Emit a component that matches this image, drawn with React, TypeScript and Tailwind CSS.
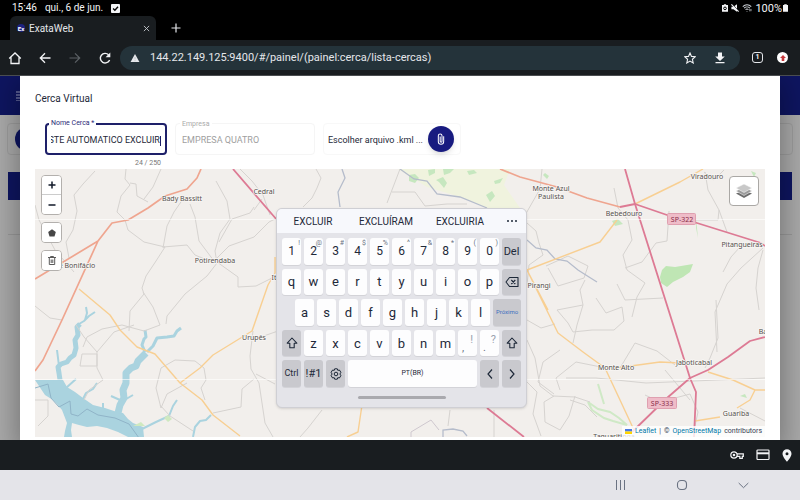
import { useLayoutEffect, useRef } from "react";
import type { ReactNode } from "react";

const FONT = "font-['Roboto','Noto_Sans',sans-serif]";

function StatusBar() {
  return (
    <div className="flex h-4 items-center justify-between bg-black px-3 text-[10px] leading-none text-gray-100">
      <div className="flex items-center gap-2">
        <span>15:46</span>
        <span>qui., 6 de jun.</span>
        <svg viewBox="0 0 10 10" className="size-[9px]">
          <rect width="10" height="10" rx="1" fill="#f3f4f6" />
          <path d="M2.3 5 4.3 7 7.8 3" fill="none" stroke="#000" strokeWidth="1.5" />
        </svg>
      </div>
      <div className="flex items-center gap-[3px]">
        <svg viewBox="0 0 8 10" className="h-2 w-[6px]">
          <path d="M2.5 0h3v1H8v9H0V1h2.5z" fill="#f3f4f6" />
          <circle cx="4" cy="5.5" r="1.800" fill="none" stroke="#000" strokeWidth="1.300" />
        </svg>
        <svg viewBox="0 0 10 10" className="size-2">
          <path d="M.5 3.300h2.500L7.500.3v9.400L3 6.700H.5z" fill="#f3f4f6" />
          <path d="M1.500 0 10 9" stroke="#000" strokeWidth="1" />
          <path d="M.5.5 9.500 9.500" stroke="#f3f4f6" strokeWidth="1.400" />
        </svg>
        <svg viewBox="0 0 12 10" className="h-2 w-[10px]" fill="none" stroke="#d1d5db" strokeWidth="1.300">
          <path d="M.7 3.200c3-3 7.600-3 10.600 0M2.400 5.200c2-2 5.200-2 7.200 0M4.200 7.100c1-.9 2.600-.9 3.600 0M6 9v.6" />
          <path d="M9.500 6.200v3M11 9V6.200" strokeWidth=".9" />
        </svg>
        <span className="flex items-center gap-px text-[11px]">
          100%
          <svg viewBox="0 0 6 9" className="h-2 w-[5px]">
            <path d="M1.5 0h3v1H6v8H0V1h1.500z" fill="#f3f4f6" />
          </svg>
        </span>
      </div>
    </div>
  );
}

function TabStrip() {
  return (
    <div className="flex h-6 items-stretch bg-black pl-[10px]">
      <div className="flex w-[146px] items-center gap-1 rounded-t-md bg-[#191d20] pl-[7px] pr-[2px] text-gray-200">
        <span className="flex size-2 items-center justify-center rounded-full bg-[#1d2380] text-[6px] font-bold text-white">Ex</span>
        <span className="flex-1 text-[10px]">ExataWeb</span>
        <button aria-label="Fechar guia" className="p-1">
          <svg viewBox="0 0 8 8" className="size-[7px]" stroke="#c7cbd0" strokeWidth="1">
            <path d="M1 1l6 6M7 1 1 7" />
          </svg>
        </button>
      </div>
      <button aria-label="Nova guia" className="ml-[11px] px-1">
        <svg viewBox="0 0 10 10" className="size-[10px]" stroke="#e5e7eb" strokeWidth="1.200">
          <path d="M5 .5v9M.5 5h9" />
        </svg>
      </button>
    </div>
  );
}

function Toolbar() {
  return (
    <div className="flex h-9 items-center border-b border-[#4a4d50] bg-[#191d20] pl-2 pr-3 text-gray-100">
      <div className="flex items-center gap-4">
        <button aria-label="Início">
          <svg viewBox="0 0 14 14" className="size-[14px]" fill="none" stroke="currentColor" strokeWidth="1.300">
            <path d="M1.200 7.500 7 2l5.800 5.500M3 6.300V12.500h8V6.300" />
          </svg>
        </button>
        <button aria-label="Voltar">
          <svg viewBox="0 0 14 14" className="size-[14px]" fill="none" stroke="currentColor" strokeWidth="1.300">
            <path d="M12.500 7H2.500M7 2.300 2.300 7 7 11.700" />
          </svg>
        </button>
        <button aria-label="Avançar">
          <svg viewBox="0 0 14 14" className="size-[14px]" fill="none" stroke="#5c6165" strokeWidth="1.200">
            <path d="M1.500 7h10M7 2.300 11.700 7 7 11.700" />
          </svg>
        </button>
        <button aria-label="Recarregar">
          <svg viewBox="0 0 14 14" className="size-[14px]" fill="none" stroke="currentColor" strokeWidth="1.400">
            <path d="M11.600 9A4.800 4.800 0 1 1 10.600 3.800" />
            <path d="M12.300 1.500v4.700H7.600z" fill="currentColor" stroke="none" />
          </svg>
        </button>
      </div>
      <div className="ml-2 flex h-6 flex-1 items-center rounded-full bg-[#24333a] pl-[10px] pr-[15px]">
        <svg viewBox="0 0 10 9" className="h-2 w-[10px]">
          <path d="M5 0l5 9H0z" fill="#e5e7eb" />
          <path d="M5 3.500v2.500M5 7v1" stroke="#9aa3a8" strokeWidth=".6" />
        </svg>
        <input
          aria-label="Endereço"
          readOnly
          value="144.22.149.125:9400/#/painel/(painel:cerca/lista-cercas)"
          className="ml-[10px] min-w-0 flex-1 bg-transparent pt-[2px] text-[11px] text-gray-200 outline-none"
        />
        <button aria-label="Favoritar">
          <svg viewBox="0 0 12 12" className="size-3" fill="none" stroke="currentColor" strokeWidth="1.100">
            <path d="M6 1l1.500 3.400 3.700.4-2.800 2.500.8 3.700L6 9.100 2.800 11l.8-3.700L.8 4.800l3.700-.4z" />
          </svg>
        </button>
        <button aria-label="Baixar" className="ml-[19px]">
          <svg viewBox="0 0 10 12" className="h-3 w-[10px]" fill="currentColor">
            <path d="M3 .5h4v4h2.800L5 9 .2 4.500H3zM.5 10h9v1.300h-9z" />
          </svg>
        </button>
      </div>
      <button aria-label="Guias abertas" className="ml-3 flex size-[11px] items-center justify-center rounded-[3px] border border-gray-200 text-[7px] font-bold">
        1
      </button>
      <button aria-label="Menu" className="ml-[14px] flex size-[11px] items-center justify-center rounded-full bg-white">
        <svg viewBox="0 0 6 6" className="size-[6px]" fill="#c5393d">
          <path d="M3 0l3 3H4.300v3H1.700V3H0z" />
        </svg>
      </button>
    </div>
  );
}

/* Application page dimmed behind the dialog */
function DimmedPage() {
  return (
    <div aria-hidden="true" className="absolute inset-0 bg-[#a9a9a9]">
      <div className="flex h-[39px] items-center bg-[#0e1560] pl-4">
        <svg viewBox="0 0 10 10" className="size-[10px]" stroke="#9a9dc0" strokeWidth="1.200">
          <path d="M0 1h10M0 4h10M0 7h10M0 10h10" />
        </svg>
      </div>
      <div className="mx-[7px] mt-2 flex h-8 items-center justify-between rounded border border-[#9c9c9c] pl-[7px]">
        <div className="size-6 rounded-full bg-[#0e1560]" />
      </div>
      <div className="mx-2 mt-[17px] h-7 bg-[#0e1560]" />
      <div className="mx-2 h-[35px] border-b border-[#989898]" />
    </div>
  );
}

function FormRow() {
  const nameRef = useRef<HTMLInputElement>(null);
  useLayoutEffect(() => {
    const el = nameRef.current;
    if (el) el.scrollLeft = el.scrollWidth;
  }, []);
  return (
    <form className="flex items-start gap-2 px-[10px] text-[9px]" onSubmit={(e) => e.preventDefault()}>
      <div>
        <div className="relative flex h-8 w-[122px] items-center rounded border-2 border-[#1e2069] px-1 pt-1">
          <label htmlFor="nome" className="absolute -top-2 left-[2px] bg-white px-[2px] text-[7px] leading-3 text-[#2a2b77]">
            Nome Cerca *
          </label>
          <input
            id="nome"
            ref={nameRef}
            defaultValue="TESTE AUTOMATICO EXCLUIR"
            className="w-full min-w-0 bg-transparent text-[9px] text-gray-800 outline-none"
          />
          <span className="h-[10px] w-px shrink-0 bg-[#1e2069]" />
        </div>
        <p className="pr-[6px] pt-[3px] text-right text-[7px] leading-[10px] text-[#777777]">24 / 250</p>
      </div>
      <div className="relative flex h-8 w-[140px] items-center rounded border border-[#f5f5f5] px-[6px] pt-1">
        <label htmlFor="empresa" className="absolute -top-[6px] left-1 bg-white px-[2px] text-[7px] leading-3 text-[#aaaaaa]">
          Empresa
        </label>
        <input id="empresa" readOnly value="EMPRESA QUATRO" className="w-full min-w-0 bg-transparent text-[9px] text-[#a0a0a0] outline-none" />
      </div>
      <div className="flex h-8 w-[138px] items-center justify-between rounded border border-[#f8f8f8] pl-1 pr-[6px]">
        <span className="pt-1 text-[9px] text-gray-800">Escolher arquivo .kml ...</span>
        <button aria-label="Anexar arquivo" className="flex size-[26px] shrink-0 items-center justify-center rounded-full bg-[#181b80] shadow-md">
          <svg viewBox="0 0 8 13" className="h-3 w-2" fill="none" stroke="#fff" strokeWidth="1.100">
            <path d="M6.900 3.500v5.800a2.900 2.900 0 0 1-5.800 0V3a2 2 0 0 1 4 0v6a1 1 0 0 1-2 0V3.800" />
          </svg>
        </button>
      </div>
    </form>
  );
}

const LABELS: [number, number, string][] = [
  [182, 201, "Bady Bassitt"],
  [264, 194, "Cedral"],
  [215, 263, "Potirendaba"],
  [77, 268, "é Bonifácio"],
  [276, 280, "Itá"],
  [254, 340, "Urupês"],
  [551, 191, "Monte Azul"],
  [551, 199, "Paulista"],
  [624, 216, "Bebedouro"],
  [707, 179, "Viradouro"],
  [742, 247, "Pitangueiras"],
  [539, 288, "Pirangi"],
  [616, 370, "Monte Alto"],
  [694, 365, "Jaboticabal"],
  [736, 416, "Guariba"],
  [763, 334, "Ba"],
  [614, 439, "Taquaritinga"],
];

function MapDrawing() {
  return (
    <svg viewBox="35 169 730 268" preserveAspectRatio="xMidYMid slice" className="absolute inset-0 size-full">
      <rect x="35" y="169" width="730" height="268" fill="#f2efec" />
      <path d="M398 169 427 187 460 197 487 208H520L504 185 510 169z" fill="#f0f3de" />
      <path d="M660 277l2-7 4-4 9 1 18-3-3 8-7 5-10 5-6 5-6-4z" fill="#bfe6b4" />
      <g fill="#c6e7bf">
        <path d="M409 175l6-1 4 4-4 5-6-2zM436 180l7-3 4 6-3 5-5-6zM428 170l7-1v4l-6 3zM467 171l7-1 3 3-8 2zM486 195l6-4 3 5-5 6zM494 181l9-3-3 5-5 1zM443 169h11l-4 4-6 2zM545 173l4 3-2 3-4-4zM612 221l6-2 5 5-8 2zM696 218l2 20-2-10zM751 171l5 2-2 4zM740 396l5-2 2 4z" />
      </g>
      <path d="M588 402l10 7 12 3 9 6 8 7-14-4-9-3-12-8zM598 384l3 10 3 10" fill="none" stroke="#cfe9c6" strokeWidth="2" />

      {/* Reservoir and its arms */}
      <path
        d="M35 380h28l4 7 8 5 8 6 10 7 12 3 12 4 6 1 5 6 5 4 10 4 1 10h-16l-10-5-11-4-10-2-10 1-8-2-7-2-1 7 1 7h-8l1-6 2-8-5-13-5-6-4-4-8-5z"
        fill="#aad3df"
      />
      <g fill="none" stroke="#aad3df" strokeLinejoin="round">
        <path d="M60 380l-1-7-1-6 3-3 6-2 3-4 4-3 2-7-1-8 3-5-1-8 3-3" strokeWidth="5" />
        <path d="M59 366l-1-8-1-8M79 324l5-3 5-5 6-4M85 320l2-7-1-6" strokeWidth="2" />
        <path d="M118 413l2-8 4-7-1-8 3-7v-10l5-5 5-2 2-5 8-8" strokeWidth="7" />
        <path d="M145 352l-3-7 2-6 2-2-1-7M147 352l6-6 4-8 10-1 7-1 3-5 4-3" strokeWidth="3" />
        <path d="M83 399l3-6 7-4 4-6M142 429l14-7 13-6 4-10 4-6M193 437l2-10 5-6 6-1 5-5M111 396l9 4M121 402l12-7M103 408v-5M66 388l10-9" strokeWidth="2" />
      </g>
      <path d="M133 426l8-4 4 4zM164 418l4-3 4 4-4 3z" fill="#cfe9c0" />
      <path d="M35 388l13-4 3 14 8 9 11-6 1 13 7 2 9-7 11 6 17 3 14 6 10 14" fill="none" stroke="#90b4c8" strokeWidth="1" />

      {/* Minor roads */}
      <g fill="none" stroke="#d6d3d0" strokeWidth="1" strokeLinejoin="round">
        <path d="M95 171l-12 13-9 11 3 16-4 19-7 12 3 16" />
        <path d="M126 169l-1 10 5 6-9 11-4 16 8 8 3 10 16 12 21 5-9 14-10 15-4 12 2 6-14 17-1 20" />
        <path d="M161 169l-8 18-9 12M130 183l6 1 1 12 11 6M35 205l4 15 16 30 19 22" />
        <path d="M183 199l-9 13-7 14-4 22M190 204l5 13 4 24 15 20 15-15 25-9 15-15 8-4M163 247l24-2 8 10 19 8" />
        <path d="M216 181l11 20 3 18-10 14-5 18 2 12-10 13-22 18-18 22-1 8M217 262l21 15v10l18-1 20-10" />
        <path d="M254 207l-4 6-18 6-13 23M262 199l-8 11M143 292l10 15 7 18-16 6-22-6-20 4-15 8-4 10M35 306l15 12 12 2" />
        <path d="M97 352l-13-15-8-12M97 352l17-20 20-7M97 352v16l6 12-14 10-5 10M82 354h15v12H80zM35 400h13v16l-10 10" />
        <path d="M161 408l-5-20 5-20 14-8 20 1 9 7 2 12-5 8 4 12M161 408l6-14 20-11" />
        <path d="M213 413l28-6 1-18 12-10M253 331l-3 25 1 13 8 14 6 40 8 14M258 338l20-7M256 374l19 10" />
        <path d="M160 405l10 11 23 15M322 410l-14 18-8 9M240 169l12 12 11 14 7 20" />
        <path d="M316 169l5 9-4 10-5 10-9 9M400 169l-13 34M392 192h23l10 14 22-2h20" />
        <path d="M542 169l-2 20-8 14-12 21M527 223l9 8 3 12 4 12-14 10-2 20M548 268l10 18 26-8 4-12-20-10-22 10" />
        <path d="M614 188l4 20 10 12 4 20-9 15 4 15 18 13-8 14-5 20M669 211l-2 30-11 2-14 19-17 6M625 300l38-2M625 300l-8-16" />
        <path d="M585 280l-5 10 3 15-6 20-4 18M583 305l-26 5 11 13 5 9 19-2h22l10-9-2-14-16 6-10-15" />
        <path d="M705 172l3 18 11 20-1 10-24 0M719 210l8 22M704 172l10 8 10-10M763 250l-5 18-2 20 3 22M763 248l-22 20-14 16-12 28 2 40" />
        <path d="M716 300l2 38-8 20-5 10M740 247l-9 10-8 15M527 320l14 8 14-4M527 340l8 18 5 28 13 10 22 1 15 5M560 350l-17 12-5 20 16 12" />
        <path d="M575 396l-6 20-9 14-15-8-1-20 10-6M527 382l10 10-4 22 8 22M570 400l15 5 12 12M560 390l-4-12 20-16 25 5" />
        <path d="M620 368l15-25 22 8 18 14M566 378h30l50 5 119-5M645 395l15 7 30-8 8 18-3 14M665 370l25 30M740 408l25 13M494 410v27M450 410l-2 16" />
      </g>
      <path d="M411 437v-5l20-12 8 10" fill="none" stroke="#cfc8cf" />
      <path d="M342 169l3 9-7 14 2 15M527 240l9 8 11 2 8 9 12 2 11 9 11 7 8 5M400 169l14 10 13 2 10 13 23 3 27 11M443 437v-7l10-1 10 2 4 5" fill="none" stroke="#b5bccb" strokeWidth="1.300" />

      {/* Secondary roads */}
      <g fill="none" stroke="#f8cf92" strokeWidth="1.400" strokeLinejoin="round">
        <path d="M79 289l31 26 10 15 17 17 18 7 25 29 22 17 11 15 27 21" />
        <path d="M180 383l20-15 13-13 39-24 16-46 7-12v-16" />
        <path d="M527 270l73-28 17-22M635 204l45-22 23-13M527 270l21 40M527 270l31 63 25 19 22 16 15 32 14 30M616 368l44-6 20 1" />
        <path d="M708 372l25 8 22 10h10M755 390l-5 10-13 8M695 421l25-4M362 405l-4 27-11 5" />
      </g>

      {/* Trunk roads and motorways */}
      <g fill="none" stroke="#efa58f" strokeWidth="1.700" strokeLinejoin="round">
        <path d="M35 279l63-38 14-18 16-3 20-12 17-12 22-7 10-11 4-9M98 241 62 320 43 360l-8 11" />
        <path d="M500 169l20 8 37 10 30 11 33 9" />
      </g>
      <g fill="none" stroke="#dd7a94" strokeWidth="1.800" strokeLinejoin="round">
        <path d="M233 169l44 51M487 408l37 29M620 207l15-3 32 11 30 8 64 20 4 3" />
        <path d="M625 169l10 35 55 174 6 14-2 45M632 432l35-34 23-20 18-8 20-13 22-16 15-4" />
      </g>
      <path d="M35 219.500h730M35 379.500h730" stroke="#fff" strokeOpacity=".6" />

      <g fill="#efbcc8" stroke="#dfa0b0">
        <rect x="667.500" y="213.500" width="28" height="11" rx="1" />
        <rect x="647.500" y="397.500" width="29" height="11" rx="1" />
      </g>
      <g fontSize="7" textAnchor="middle" className="font-['Noto_Sans',sans-serif]">
        <g fill="#8a2d49">
          <text x="682" y="222">SP-322</text>
          <text x="662" y="406">SP-333</text>
        </g>
        <g fill="#55504c" stroke="#f8f6f4" strokeWidth="1.500" paintOrder="stroke">
          {LABELS.map(([x, y, name]) => (
            <text key={name} x={x} y={y}>
              {name}
            </text>
          ))}
        </g>
      </g>
    </svg>
  );
}

const CONTROL = "flex w-full items-center justify-center bg-white text-gray-900";
const CONTROL_BOX = "w-[21px] rounded-sm border border-[#b3b0ad] overflow-hidden";

function MapControls() {
  return (
    <div className="absolute left-[6px] top-[6px] flex flex-col gap-[7px]">
      <div className={CONTROL_BOX}>
        <button aria-label="Aproximar" className={`${CONTROL} h-[19px] border-b border-[#ccc]`}>
          <svg viewBox="0 0 8 8" className="size-2" stroke="currentColor" strokeWidth="1.500">
            <path d="M4 .5v7M.5 4h7" />
          </svg>
        </button>
        <button aria-label="Afastar" className={`${CONTROL} h-[19px]`}>
          <svg viewBox="0 0 8 8" className="size-2" stroke="currentColor" strokeWidth="1.500">
            <path d="M.5 4h7" />
          </svg>
        </button>
      </div>
      <div className={CONTROL_BOX}>
        <button aria-label="Desenhar polígono" className={`${CONTROL} h-[19px]`}>
          <svg viewBox="0 0 8 8" className="size-2" fill="#464646">
            <path d="M4 .3 7.800 3 6.500 7.500h-5L.2 3z" />
          </svg>
        </button>
      </div>
      <div className={CONTROL_BOX}>
        <button aria-label="Excluir polígono" className={`${CONTROL} h-[19px]`}>
          <svg viewBox="0 0 8 9" className="h-[9px] w-2" fill="none" stroke="#5a5a5a" strokeWidth="1">
            <path d="M0 1.500h8M2.500 1.500V.5h3v1M1.300 2v6.500h5.400V2M3.200 3.500v3.500M4.800 3.500v3.500" />
          </svg>
        </button>
      </div>
    </div>
  );
}

function LayersButton() {
  return (
    <button aria-label="Camadas" className="absolute right-[6px] top-[7px] flex size-[30px] items-center justify-center rounded-sm border border-[#aaa8a5] bg-white">
      <svg viewBox="0 0 18 16" className="h-4 w-[18px]">
        <path d="M1 10.500l8 4.500 8-4.500-8-3z" fill="#6d6d6d" />
        <path d="M1 8l8 4.500L17 8 9 4z" fill="#9c9c9c" stroke="#fff" strokeWidth=".5" />
        <path d="M1 5l8 4.500L17 5 9 1z" fill="#c8c8c8" stroke="#fff" strokeWidth=".5" />
      </svg>
    </button>
  );
}

function Attribution() {
  return (
    <div className="absolute bottom-0 right-0 flex h-[11px] items-center gap-[3px] bg-white/80 px-[3px] text-[7px] leading-none text-gray-700">
      <svg viewBox="0 0 7 5" className="h-[5px] w-[7px]">
        <path d="M0 0h7v2.500H0z" fill="#4c7be1" />
        <path d="M0 2.500h7V5H0z" fill="#ffd500" />
      </svg>
      <a href="#leaflet" className="text-[#0078a8]">Leaflet</a>
      <span>|</span>
      <span>©</span>
      <a href="#osm" className="text-[#0078a8]">OpenStreetMap</a>
      <span>contributors</span>
    </div>
  );
}

function Key({ children, hint, wide = "", dark = false, label }: { children: ReactNode; hint?: string; wide?: string; dark?: boolean; label?: string }) {
  return (
    <button
      aria-label={label}
      className={`relative flex items-center justify-center rounded-[3px] shadow-[0_1px_0_#d3d3d8] ${dark ? "bg-[#c9c9ce]" : "bg-[#fdfdfe]"} ${wide || "w-[19px]"}`}
    >
      {children}
      {hint && <span className="absolute right-px top-[2px] text-[7px] leading-none text-gray-500">{hint}</span>}
    </button>
  );
}

const NUMBERS = [["1", "!"], ["2", "@"], ["3", "#"], ["4", "$"], ["5", "%"], ["6", "^"], ["7", "&"], ["8", "*"], ["9", "("], ["0", ")"]];
const ROW = "flex gap-[3px]";

function ShiftIcon() {
  return (
    <svg viewBox="0 0 12 12" className="size-3" fill="none" stroke="currentColor" strokeWidth="1.100" strokeLinejoin="round">
      <path d="M6 1 1.200 6.200h2.600v4.600h4.400V6.200h2.600z" />
    </svg>
  );
}

function Keyboard() {
  return (
    <div className="absolute left-1/2 top-[39px] w-[251px] -translate-x-[124px] overflow-hidden rounded-md border border-[#cfcfd4] bg-[#e4e4e9] text-gray-800 shadow">
      <div className="flex h-6 items-center bg-[#f7f8fc] pl-4 pr-[9px] text-[10px]">
        <button className="w-10">EXCLUIR</button>
        <button className="ml-[25px] w-[56px]">EXCLUÍRAM</button>
        <button className="ml-[21px] w-[50px]">EXCLUIRIA</button>
        <button aria-label="Mais sugestões" className="ml-auto">
          <svg viewBox="0 0 10 2" className="h-[2px] w-[10px]" fill="currentColor">
            <circle cx="1" cy="1" r="1" />
            <circle cx="5" cy="1" r="1" />
            <circle cx="9" cy="1" r="1" />
          </svg>
        </button>
      </div>
      <div className="mx-[5px] mt-[5px] grid h-[149px] grid-rows-5 gap-1 text-[13px] leading-none">
        <div className={ROW}>
          {NUMBERS.map(([n, h]) => (
            <Key key={n} hint={h}><span className="text-xs">{n}</span></Key>
          ))}
          <Key dark><span className="text-[11px]">Del</span></Key>
        </div>
        <div className={ROW}>
          {"qwertyuiop".split("").map((c) => (
            <Key key={c}>{c}</Key>
          ))}
          <Key dark label="Apagar">
            <svg viewBox="0 0 14 12" className="h-3 w-[14px]" fill="none" stroke="currentColor" strokeWidth="1.100" strokeLinejoin="round">
              <path d="M4.500 1.500H13v9H4.500L1 6zM6.300 4l4 4M10.300 4l-4 4" />
            </svg>
          </Key>
        </div>
        <div className={`${ROW} pl-[13px]`}>
          {"asdfghjkl".split("").map((c) => (
            <Key key={c}>{c}</Key>
          ))}
          <Key dark wide="w-7"><span className="text-[6px] text-[#3f6fc0]">Próximo</span></Key>
        </div>
        <div className={ROW}>
          <Key dark label="Shift"><ShiftIcon /></Key>
          {"zxcvbnm".split("").map((c) => (
            <Key key={c}>{c}</Key>
          ))}
          <Key>
            <span className="flex w-full items-center justify-between px-1 text-[11px] text-gray-400">
              <span className="pt-2 text-gray-500">,</span>
              <span className="pb-2">!</span>
            </span>
          </Key>
          <Key>
            <span className="flex w-full items-center justify-between px-[3px] text-[11px] text-gray-400">
              <span className="pt-2 text-gray-500">.</span>
              <span className="pb-2">?</span>
            </span>
          </Key>
          <Key dark label="Shift direito"><ShiftIcon /></Key>
        </div>
        <div className={ROW}>
          <Key dark><span className="text-[9px]">Ctrl</span></Key>
          <Key dark><span className="text-[11px]">!#1</span></Key>
          <Key dark label="Configurações">
            <svg viewBox="0 0 12 12" className="size-3" fill="none" stroke="currentColor" strokeWidth="1" strokeLinejoin="round">
              <path d="M4.700.8h2.600l.5 1.600 1.600-.4 1.500 2.300L9.900 6l1 1.700L9.400 10l-1.600-.4-.5 1.600H4.700l-.5-1.600-1.600.4-1.500-2.300 1-1.700-1-1.700L2.600 2l1.600.4z" />
              <circle cx="6" cy="6" r="1.800" />
            </svg>
          </Key>
          <Key wide="w-[129px]"><span className="text-[7px]">PT(BR)</span></Key>
          <Key dark label="Esquerda">
            <svg viewBox="0 0 8 12" className="h-3 w-2" fill="none" stroke="currentColor" strokeWidth="1.200"><path d="M6 1.500 2 6l4 4.500" /></svg>
          </Key>
          <Key dark label="Direita">
            <svg viewBox="0 0 8 12" className="h-3 w-2" fill="none" stroke="currentColor" strokeWidth="1.200"><path d="M2 1.500 6 6l-4 4.500" /></svg>
          </Key>
        </div>
      </div>
      <div className="flex h-5 items-center justify-center">
        <span className="h-[3px] w-[88px] rounded-full bg-[#a9a9ae]" />
      </div>
    </div>
  );
}

function SystemBars() {
  return (
    <>
      <div className="flex h-[30px] items-center justify-end gap-3 bg-[#191d20] pr-2 text-gray-100">
        <button aria-label="Senhas">
          <svg viewBox="0 0 14 10" className="h-[10px] w-[14px]" fill="none" stroke="currentColor" strokeWidth="1.200">
            <circle cx="4" cy="5" r="3.200" />
            <circle cx="4" cy="5" r=".7" />
            <path d="M7 3.800h6.300v2.500h-1v2h-2.500v-2H7" />
          </svg>
        </button>
        <button aria-label="Cartões">
          <svg viewBox="0 0 14 12" className="h-3 w-[14px]" fill="none" stroke="currentColor" strokeWidth="1.200">
            <rect x="1" y="1" width="12" height="9.500" rx=".8" />
            <path d="M1 4.300h12" strokeWidth="2" />
          </svg>
        </button>
        <button aria-label="Endereços">
          <svg viewBox="0 0 10 13" className="h-[13px] w-[10px]" fill="currentColor" fillRule="evenodd">
            <path d="M5 .3A4.500 4.500 0 0 0 .5 4.800C.5 8 5 12.800 5 12.800S9.500 8 9.500 4.800A4.500 4.500 0 0 0 5 .3zm0 3a1.500 1.500 0 1 1 0 3 1.500 1.500 0 0 1 0-3z" />
          </svg>
        </button>
      </div>
      <nav className="flex h-[30px] items-center justify-end gap-[50px] bg-[#e4e4e9] pr-[51px] text-gray-500">
        <button aria-label="Recentes">
          <svg viewBox="0 0 10 10" className="size-[10px]" stroke="currentColor"><path d="M.5 0v10M4.500 0v10M8.500 0v10" /></svg>
        </button>
        <button aria-label="Tela inicial">
          <svg viewBox="0 0 12 12" className="size-3" fill="none" stroke="currentColor" strokeWidth="1.100"><rect x="1.500" y="1.500" width="9" height="9" rx="3.500" /></svg>
        </button>
        <button aria-label="Ocultar teclado">
          <svg viewBox="0 0 11 7" className="h-[7px] w-[11px]" fill="none" stroke="currentColor" strokeWidth="1"><path d="M.7 1l4.800 4.700L10.300 1" /></svg>
        </button>
      </nav>
    </>
  );
}

export default function App() {
  return (
    <div className={`flex min-h-screen flex-col bg-black ${FONT}`}>
      <StatusBar />
      <TabStrip />
      <Toolbar />
      <main className="relative flex flex-1 flex-col overflow-hidden">
        <DimmedPage />
        <section
          aria-label="Cerca Virtual"
          className="relative mx-5 flex flex-1 flex-col bg-white px-[15px] pb-[3px] pt-[15px] shadow-[0_9px_26px_4px_rgba(0,0,0,0.3)]"
        >
          <h1 className="mb-[17px] text-[10px] leading-[15px] text-gray-800">Cerca Virtual</h1>
          <FormRow />
          <div className="relative mt-px min-h-[268px] flex-1 bg-[#f2efec]">
            <div className="absolute inset-0 overflow-hidden">
              <MapDrawing />
              <MapControls />
              <LayersButton />
              <Attribution />
            </div>
            <Keyboard />
          </div>
        </section>
      </main>
      <SystemBars />
    </div>
  );
}
